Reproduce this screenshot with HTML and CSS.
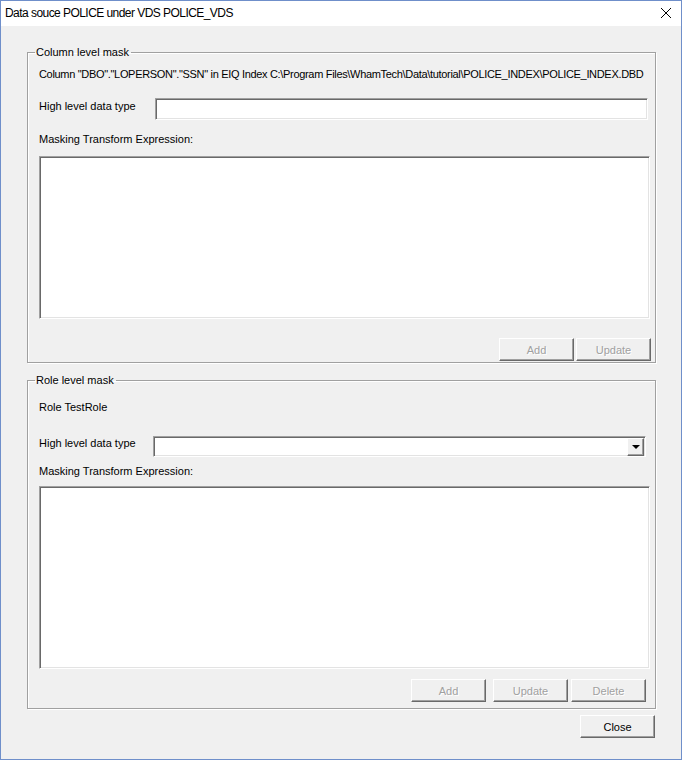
FILE: index.html
```html
<!DOCTYPE html>
<html lang="en">
<head>
    <meta charset="UTF-8">
    <title>Data souce POLICE under VDS POLICE_VDS</title>
    <link rel="stylesheet" href="styles.css">
</head>
<body>
    <div class="window">
        <!-- Barra de título -->
        <div class="titlebar">
            <span class="title">Data souce POLICE under VDS POLICE_VDS</span>
            <svg class="close-x" width="12" height="12" viewBox="0 0 12 12">
                <path d="M1 1 L11 11 M11 1 L1 11" stroke="#000" stroke-width="1" fill="none"/>
            </svg>
        </div>

        <div class="dialog">
            <!-- Máscara por coluna -->
            <fieldset class="group group-column">
                <legend>Column level mask</legend>
                <div class="path-text">Column "DBO"."LOPERSON"."SSN" in EIQ Index C:\Program Files\WhamTech\Data\tutorial\POLICE_INDEX\POLICE_INDEX.DBD</div>
                <div class="field-row row-column">
                    <label class="field-label">High level data type</label>
                    <input type="text" class="edit">
                </div>
                <div class="expr-label">Masking Transform Expression:</div>
                <textarea class="expr-box"></textarea>
                <div class="button-row">
                    <button class="btn" disabled>Add</button>
                    <button class="btn" disabled>Update</button>
                </div>
            </fieldset>

            <!-- Máscara por papel -->
            <fieldset class="group group-role">
                <legend>Role level mask</legend>
                <div class="role-text">Role TestRole</div>
                <div class="field-row row-role">
                    <label class="field-label">High level data type</label>
                    <div class="combo">
                        <span class="combo-btn"><span class="arrow"></span></span>
                    </div>
                </div>
                <div class="expr-label">Masking Transform Expression:</div>
                <textarea class="expr-box"></textarea>
                <div class="button-row">
                    <button class="btn" disabled>Add</button>
                    <button class="btn btn-update" disabled>Update</button>
                    <button class="btn btn-delete" disabled>Delete</button>
                </div>
            </fieldset>

            <div class="footer">
                <button class="btn btn-close">Close</button>
            </div>
        </div>
    </div>
</body>
</html>
```

FILE: styles.css
```css
/* Reset */
* {
    margin: 0;
    padding: 0;
    box-sizing: border-box;
}

body {
    font-family: 'Liberation Sans', Arial, sans-serif;
    font-size: 11px;
    color: #000;
    background: #f0f0f0;
}

/* Janela */
.window {
    width: 682px;
    height: 760px;
    border: 1px solid #6f8fca;
    background: #f0f0f0;
    display: flex;
    flex-direction: column;
}

.titlebar {
    height: 25px;
    background: #fff;
    display: flex;
    align-items: center;
    justify-content: space-between;
    padding: 0 9px 1px 4px;
}

.title {
    font-family: 'Liberation Sans', Arial, sans-serif;
    font-size: 12px;
    letter-spacing: -0.55px;
}

.close-x {
    display: block;
}

.dialog {
    flex: 1;
    width: 680px;
    padding: 20px 25px 0 26px;
    display: flex;
    flex-direction: column;
}

/* Group box */
.group {
    width: 629px;
    min-width: 0;
    border: 1px solid #a0a0a0;
    box-shadow: 1px 1px 0 #fff, inset 1px 1px 0 #fff;
    padding: 0 4px 1px 11px;
    display: flex;
    flex-direction: column;
}

.group legend {
    margin-left: -4px;
    padding: 0 2px 0 1px;
    line-height: 13px;
    height: 13px;
}

.group-role {
    margin-top: 11px;
    padding-bottom: 6px;
    padding-right: 9px;
}

.path-text {
    margin-top: 9px;
    line-height: 13px;
    white-space: nowrap;
    letter-spacing: -0.32px;
}

.role-text {
    margin-top: 14px;
    line-height: 13px;
}

.field-row {
    display: flex;
    align-items: flex-start;
}

.field-label {
    padding-top: 2px;
    line-height: 13px;
}

.row-column {
    margin-top: 17px;
}

.row-column .field-label {
    width: 116px;
}

.row-role {
    margin-top: 22px;
}

.row-role .field-label {
    width: 114px;
    padding-top: 1px;
}

/* Campos afundados */
.edit,
.expr-box,
.combo {
    background: #fff;
    border: 1px solid;
    border-color: #a0a0a0 #fff #fff #a0a0a0;
    box-shadow: inset 1px 1px 0 #696969, inset -1px -1px 0 #e3e3e3;
    outline: none;
    font: inherit;
}

.edit {
    width: 493px;
    height: 22px;
}

.combo {
    width: 493px;
    height: 21px;
    display: flex;
    justify-content: flex-end;
    padding: 1px 1px 1px 0;
}

.combo-btn {
    width: 17px;
    height: 18px;
    background: #f0f0f0;
    border: 1px solid;
    border-color: #fff #696969 #696969 #fff;
    box-shadow: inset -1px -1px 0 #a0a0a0;
    display: flex;
    align-items: center;
    justify-content: center;
}

.arrow {
    width: 0;
    height: 0;
    border-left: 4px solid transparent;
    border-right: 4px solid transparent;
    border-top: 4px solid #000;
}

.expr-label {
    line-height: 13px;
}

.group-column .expr-label {
    margin-top: 13px;
}

.group-role .expr-label {
    margin-top: 8px;
}

.expr-box {
    width: 611px;
    resize: none;
    display: block;
}

.group-column .expr-box {
    margin-top: 10px;
    height: 163px;
}

.group-role .expr-box {
    margin-top: 8px;
    height: 183px;
}

/* Botões */
.button-row {
    display: flex;
    justify-content: flex-end;
    gap: 2px;
}

.group-column .button-row {
    margin-top: 19px;
}

.group-role .button-row {
    margin-top: 10px;
    gap: 0;
}

.btn {
    width: 75px;
    height: 23px;
    background: #f0f0f0;
    border: 1px solid;
    border-color: #fff #696969 #696969 #fff;
    box-shadow: inset -1px -1px 0 #a0a0a0;
    font: inherit;
    color: #000;
}

.btn:disabled {
    color: #a0a0a0;
    text-shadow: 1px 1px 0 #fff;
}

.btn-update {
    margin-left: 7px;
}

.btn-delete {
    margin-left: 3px;
}

.footer {
    display: flex;
    justify-content: flex-end;
    margin-top: 6px;
    padding-right: 1px;
}
```
